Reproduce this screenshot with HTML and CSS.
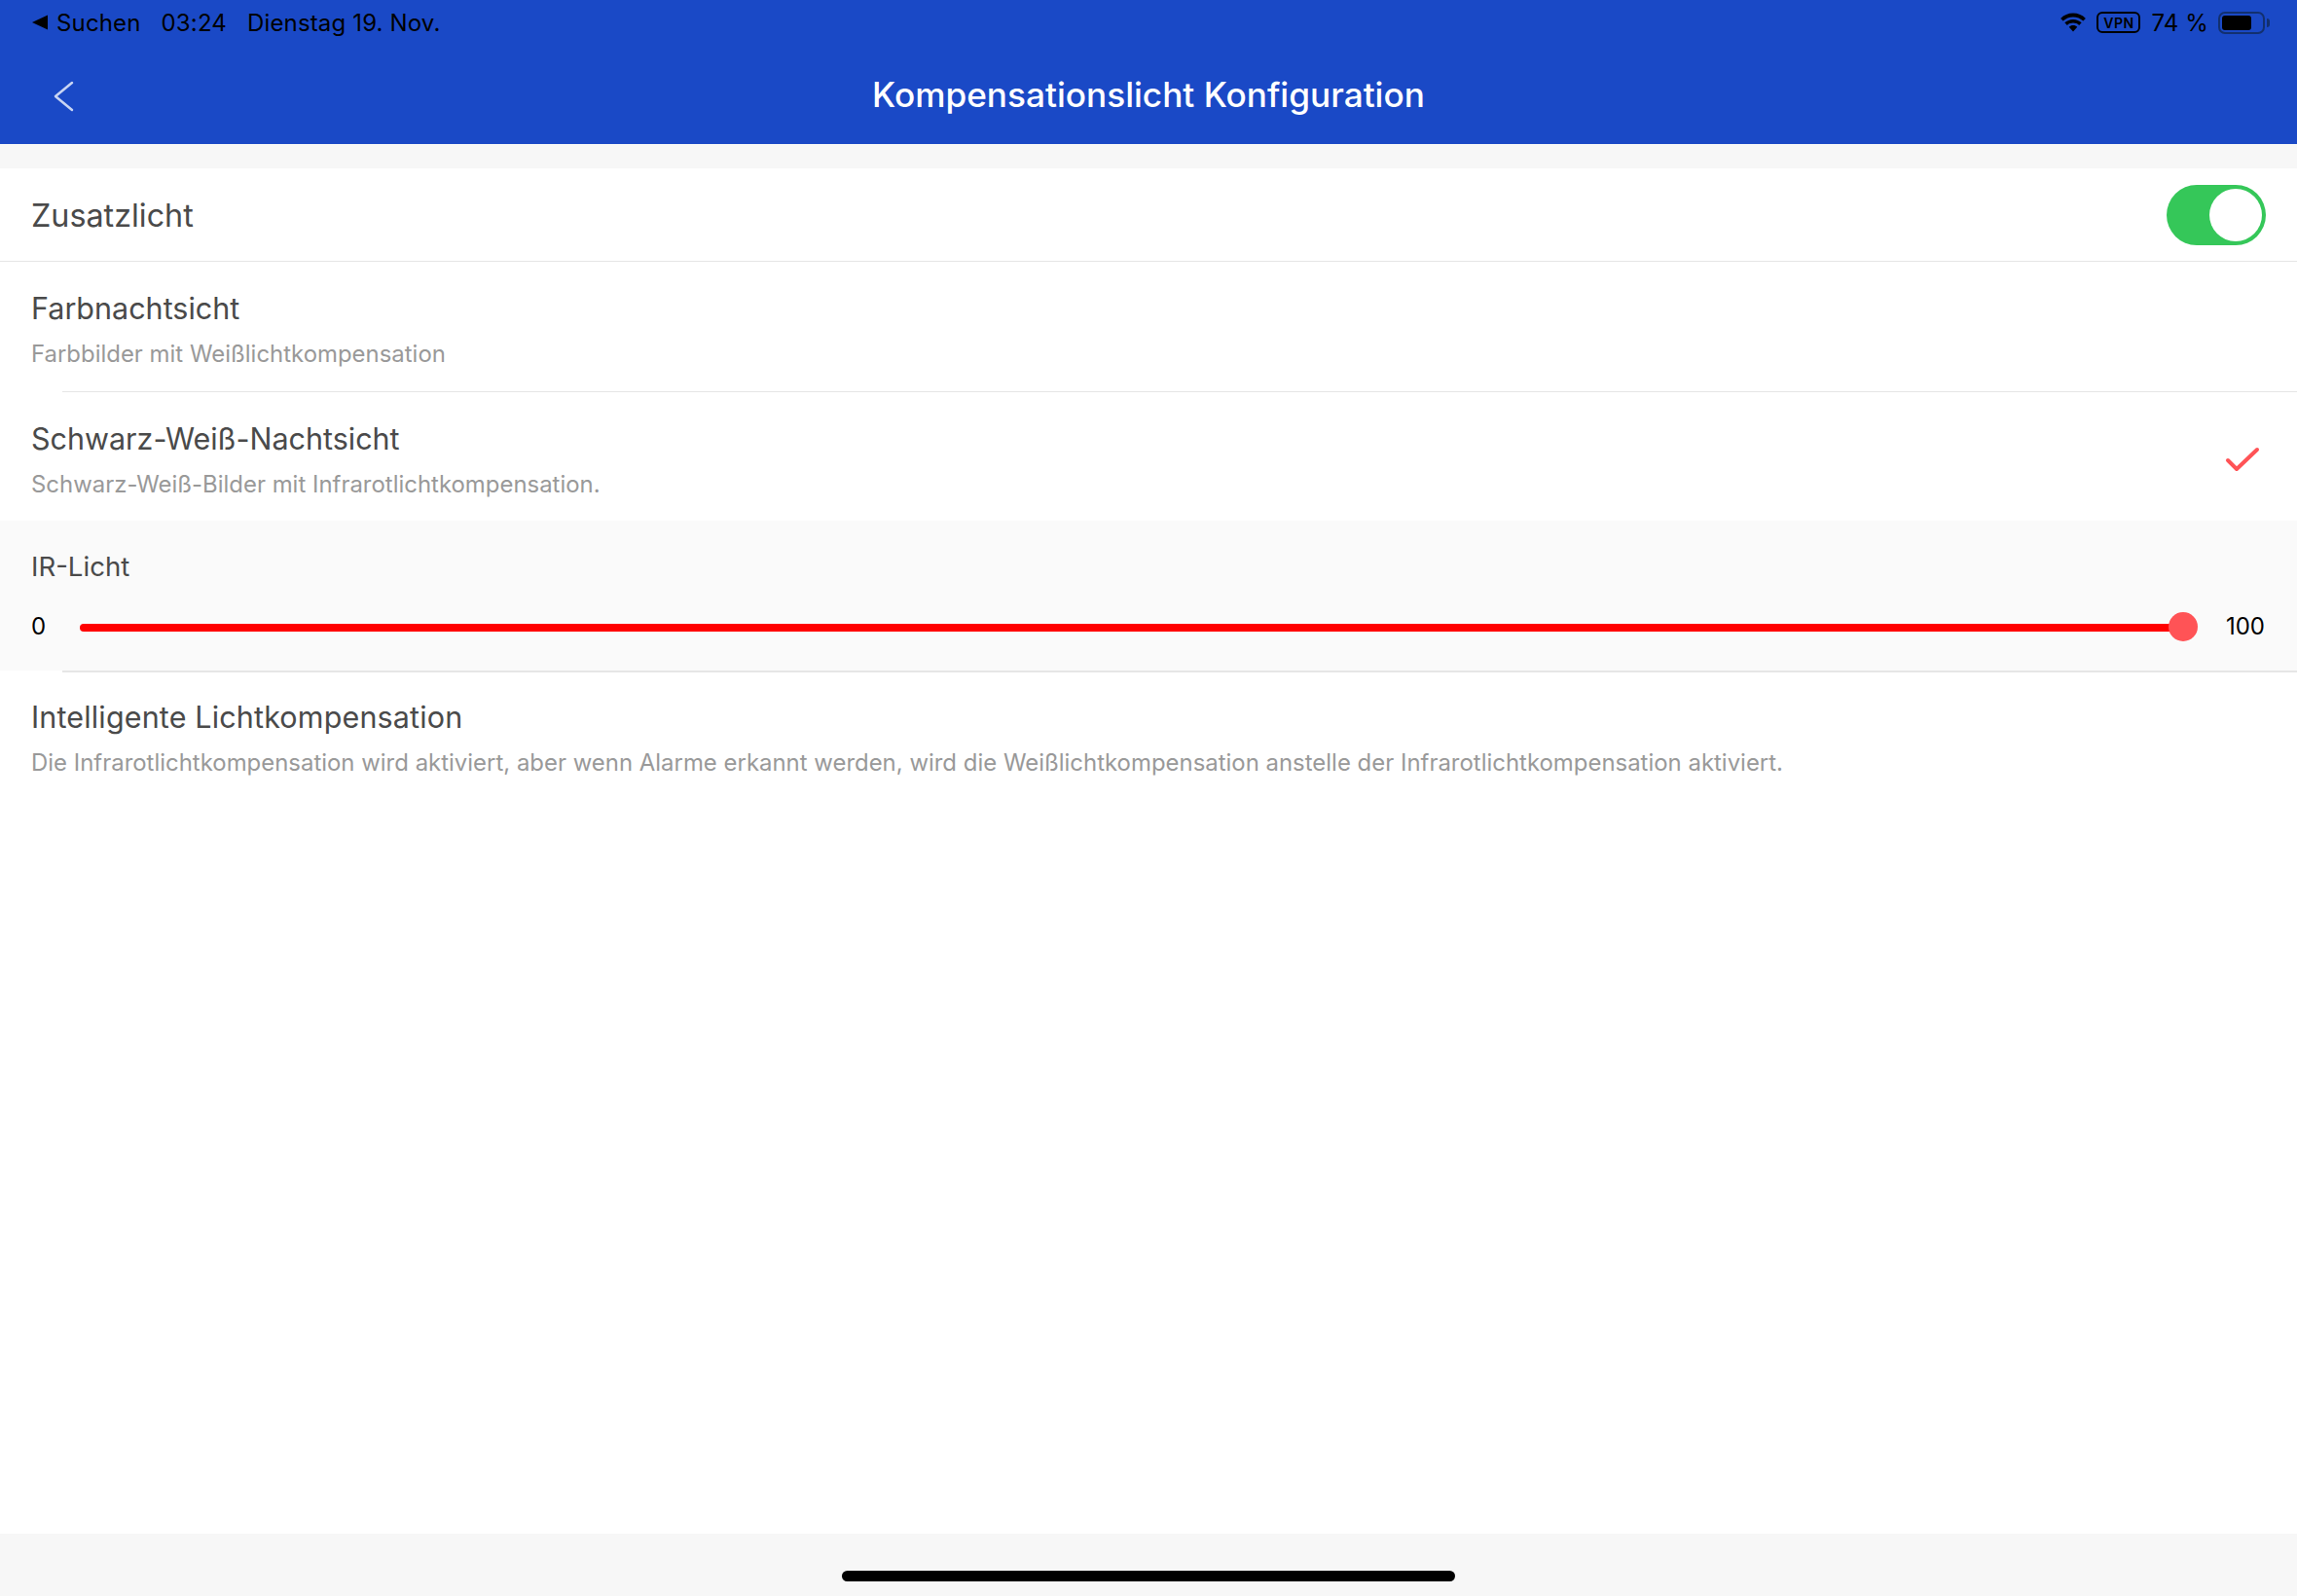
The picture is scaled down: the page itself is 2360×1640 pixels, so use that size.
FILE: index.html
```html
<!DOCTYPE html>
<html lang="de">
<head>
<meta charset="utf-8">
<title>Kompensationslicht Konfiguration</title>
<link rel="stylesheet" href="styles.css">
</head>
<body>
<div class="app">
  <header class="header">
    <div class="status">
      <div class="status-left">
        <span class="back-app"><svg class="tri" width="17" height="16" viewBox="0 0 17 16"><path d="M0 8 16 0.5V15.5Z" fill="#000"/></svg>Suchen</span>
        <span>03:24</span>
        <span>Dienstag 19. Nov.</span>
      </div>
      <div class="status-right">
        <svg class="wifi" width="28" height="20" viewBox="2 0.500 24 18"><path d="M14 4.500c3.600 0 6.900 1.400 9.300 3.700l2.300-2.400C22.600 2.800 18.500 1 14 1S5.400 2.800 2.400 5.800l2.300 2.400C7.100 5.900 10.400 4.500 14 4.500Z" fill="#000"/><path d="M14 10c2.100 0 4 .8 5.500 2.100l2.300-2.400C19.700 7.800 17 6.700 14 6.700s-5.700 1.100-7.800 3l2.300 2.400C10 10.800 11.900 10 14 10Z" fill="#000"/><path d="M14 12.300c-1.500 0-2.800.6-3.800 1.500L14 18l3.800-4.200c-1-.9-2.300-1.500-3.800-1.500Z" fill="#000"/></svg>
        <span class="vpn">VPN</span>
        <span class="pct">74 %</span>
        <span class="battery"><span class="battery-level"></span></span><span class="battery-tip"></span>
      </div>
    </div>
    <div class="nav">
      <svg class="nav-back" width="22" height="32" viewBox="0 0 22 32"><path d="M19 2 2 16 19 30" fill="none" stroke="#c9d5f3" stroke-width="2.500" stroke-linecap="round" stroke-linejoin="round"/></svg>
      <h1 class="nav-title">Kompensationslicht Konfiguration</h1>
    </div>
  </header>

  <main class="content">
    <section class="row row-switch">
      <span class="row-title-lg">Zusatzlicht</span>
      <span class="toggle"><span class="knob"></span></span>
    </section>
    <section class="row row-option inset">
      <div class="row-title">Farbnachtsicht</div>
      <div class="row-sub">Farbbilder mit Weißlichtkompensation</div>
    </section>
    <section class="row row-option selected">
      <div>
        <div class="row-title">Schwarz-Weiß-Nachtsicht</div>
        <div class="row-sub">Schwarz-Weiß-Bilder mit Infrarotlichtkompensation.</div>
      </div>
      <svg class="check" width="36" height="28" viewBox="0 0 36 28"><path d="M3 14 12 23 33 3" fill="none" stroke="#ff5356" stroke-width="4" stroke-linecap="round" stroke-linejoin="round"/></svg>
    </section>
    <section class="ir">
      <div class="ir-title">IR-Licht</div>
      <div class="slider-row">
        <span class="val val-min">0</span>
        <div class="track"><span class="thumb"></span></div>
        <span class="val val-max">100</span>
      </div>
    </section>
    <div class="rule"></div>
    <section class="row row-option row-last">
      <div class="row-title">Intelligente Lichtkompensation</div>
      <div class="row-sub">Die Infrarotlichtkompensation wird aktiviert, aber wenn Alarme erkannt werden, wird die Weißlichtkompensation anstelle der Infrarotlichtkompensation aktiviert.</div>
    </section>
  </main>

  <footer class="home"><span class="home-bar"></span></footer>
</div>
</body>
</html>
```

FILE: styles.css
```css
* { box-sizing: border-box; }
html, body { margin: 0; padding: 0; }
body { width: 2360px; height: 1640px; overflow: hidden; background: #fff; font-family: Inter, "Liberation Sans", sans-serif; }
.app { display: flex; flex-direction: column; height: 1640px; }

.header { height: 148px; background: #1a49c6; flex: none; display: flex; flex-direction: column; }
.status { height: 46px; margin-bottom: 2px; display: flex; justify-content: space-between; align-items: center; padding: 0 28px 0 33px; color: #000; font-size: 24px; letter-spacing: .15px; }
.status-left { display: flex; gap: 21px; align-items: center; }
.back-app { display: flex; align-items: center; gap: 8px; }
.status-right { display: flex; align-items: center; }
.wifi { margin-right: 10px; }
.vpn { width: 45px; height: 22px; border: 2.500px solid #000; border-radius: 6px; font-size: 14px; font-weight: 600; letter-spacing: .5px; display: flex; align-items: center; justify-content: center; margin-right: 11px; }
.pct { margin-right: 10px; }
.battery { width: 48px; height: 23px; border: 2.500px solid #12306f; border-radius: 7px; padding: 2px; display: flex; }
.battery-level { width: 30px; background: #000; border-radius: 3px; }
.battery-tip { width: 3px; height: 9px; background: #12306f; border-radius: 0 3px 3px 0; margin-left: 2px; }

.nav { flex: 1; position: relative; display: flex; align-items: center; justify-content: center; padding-bottom: 3px; }
.nav-back { position: absolute; left: 55px; top: 35px; }
.nav-title { margin: 0; font-size: 35.200px; font-weight: 500; color: #fff; letter-spacing: 0; }

.content { flex: 1; background: #fff; border-top: 25px solid #f7f7f7; display: flex; flex-direction: column; }
.row { padding: 0 32px; }
.row-switch { height: 96px; display: flex; align-items: center; justify-content: space-between; border-bottom: 1.500px solid #e6e6e6; }
.row-title-lg { font-size: 32.300px; line-height: 40px; color: #4a4a4a; position: relative; top: 1px; }
.row-option { height: 134px; padding-top: 27.500px; }
.inset { position: relative; }
.inset::after { content: ""; position: absolute; left: 64px; right: 0; bottom: 0; height: 1.500px; background: #e6e6e6; }
.selected { display: flex; justify-content: space-between; align-items: flex-start; height: 132px; }
.row-last { padding-top: 26px; }
.row-last .row-title { letter-spacing: .15px; }
.row-title { font-size: 30.500px; line-height: 40px; color: #4a4a4a; }
.row-sub { font-size: 23.900px; line-height: 30px; color: #999; margin-top: 12.500px; letter-spacing: .02px; }

.toggle { width: 102px; height: 62px; border-radius: 31px; background: #35c759; position: relative; display: block; }
.knob { position: absolute; right: 4px; top: 4px; width: 54px; height: 54px; background: #fff; border-radius: 50%; }
.check { margin: 28px 6px 0 0; }

.ir { height: 154px; background: #fafafa; padding: 29px 33px 0 32px; }
.ir-title { font-size: 27.600px; line-height: 36px; color: #4a4a4a; }
.slider-row { display: flex; align-items: center; margin-top: 29px; height: 30px; }
.val { font-size: 24px; color: #000; padding-bottom: 2px; }
.val-min { width: 50px; }
.val-max { width: 77px; text-align: right; }
.track { flex: 1; height: 8px; background: #f00; border-radius: 4px; position: relative; top: 1px; }
.thumb { position: absolute; right: -8px; top: -12px; width: 30px; height: 30px; border-radius: 50%; background: #ff5356; }
.rule { height: 1.500px; margin-left: 64px; background: #e6e6e6; flex: none; }

.home { height: 64px; flex: none; background: #f7f7f7; display: flex; justify-content: center; padding-top: 38px; }
.home-bar { width: 630px; height: 11px; background: #000; border-radius: 6px; }
```
